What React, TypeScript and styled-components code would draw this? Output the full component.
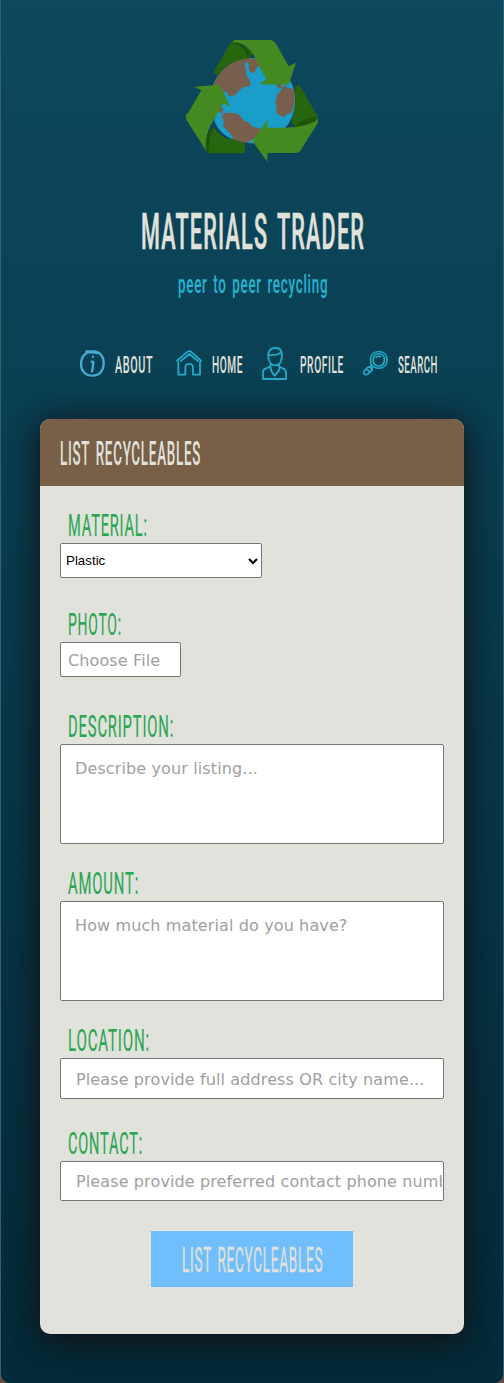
import React, { useLayoutEffect, useRef, useState } from "react";
import styled, { createGlobalStyle } from "styled-components";

const GlobalStyle = createGlobalStyle`
  *, *::before, *::after { box-sizing: border-box; }
  body { margin: 0; background: #6e4a3b; }
`;

const Page = styled.div`
  height: 1383px;
  padding: 40px 39px 0;
  border: solid #34606f;
  border-width: 0 1px;
  border-radius: 0 0 9px 9px;
  background: linear-gradient(#0d485e 0%, #0a4054 28%, #042b3a 100%);
  overflow: hidden;
  font-family: Roboto, "Liberation Sans", sans-serif;
`;

const Header = styled.header`
  display: flex;
  flex-direction: column;
  align-items: center;
`;

const Logo = styled.svg`
  display: block;
  width: 132px;
  height: 122px;
`;

const Title = styled.h1`
  margin: 40px 0 0;
  color: #e1e2dc;
  font-size: 50px;
  font-weight: 500;
  line-height: 60px;
  -webkit-text-stroke: 0.6px #e1e2dc;
`;

const Tagline = styled.p`
  margin: 8px 0 0;
  color: #25b4d2;
  font-size: 25px;
  font-weight: 500;
  line-height: 30px;
`;

const Nav = styled.nav`
  display: flex;
  height: 36px;
  margin: 45px 0 0 40px;
`;

const NavItem = styled.a<{ $gap: number; $after: number }>`
  display: flex;
  align-items: center;
  gap: ${(p) => p.$gap}px;
  margin-right: ${(p) => p.$after}px;
  color: #e1e2dc;
  font-size: 24.5px;
  font-weight: 500;
  line-height: 33px;

  & > span { padding-top: 3px; }
`;

const NavIcon = styled.svg`
  display: block;
  flex: none;
  fill: none;
  stroke: #24a9c6;
  stroke-width: 7;
  stroke-linecap: round;
  stroke-linejoin: round;
`;

const Card = styled.main`
  height: 915px;
  margin-top: 38px;
  border-radius: 10px;
  background: #e1e2dc;
  box-shadow: 0 5px 40px rgba(20, 16, 16, 0.7), 0 6px 24px rgba(20, 16, 16, 0.5);
`;

const CardHead = styled.h2`
  height: 67px;
  margin: 0;
  padding: 1px 20px 0;
  border-radius: 10px 10px 0 0;
  background: #775f48;
  color: #e1e2dc;
  font-size: 33px;
  font-weight: 500;
  line-height: 67px;
`;

const Form = styled.form`
  display: flex;
  flex-direction: column;
  align-items: flex-start;
  padding: 21px 20px 0;
`;

const Field = styled.div<{ $after: number }>`
  width: 100%;
  margin-bottom: ${(p) => p.$after}px;
`;

const Label = styled.label`
  display: block;
  height: 36px;
  padding: 0 0 0 8px;
  color: #2ba652;
  font-size: 32px;
  font-weight: 400;
  line-height: 36px;
  -webkit-text-stroke: 0.2px #2ba652;
`;

const control = `
  display: block;
  margin: 0;
  border: 1px solid #767676;
  border-radius: 2px;
  background: #fff;
  outline: none;
  font-family: "DejaVu Sans", sans-serif;
  font-size: 16px;
  letter-spacing: 0.12px;
  &::placeholder { color: #a0a0a0; opacity: 1; }
`;

const SelectBox = styled.div`
  ${control}
  display: flex;
  align-items: center;
  justify-content: space-between;
  width: 202px;
  height: 35px;
  padding: 0 3px 0 5px;
  color: #000;
  font-family: "Liberation Sans", sans-serif;
  font-size: 13.33px;
  letter-spacing: 0;
`;

const FileButton = styled.div`
  ${control}
  width: 121px;
  height: 35px;
  padding-left: 7px;
  color: #a0a0a0;
  line-height: 35px;
`;

const Area = styled.textarea`
  ${control}
  width: 100%;
  height: 100px;
  padding: 14px 14px;
  resize: none;
`;

const Input = styled.input<{ $height: number }>`
  ${control}
  width: 100%;
  height: ${(p) => p.$height}px;
  padding: 1px 1px 0 15px;
`;

const Submit = styled.button`
  display: flex;
  justify-content: center;
  align-items: center;
  align-self: center;
  width: 202px;
  height: 56px;
  padding: 2px 0 0;
  border: 0;
  background: #71befc;
  color: #e1e2dc;
  font-family: inherit;
  font-size: 35px;
  font-weight: 400;
  -webkit-text-stroke: 0.3px #e1e2dc;
`;

const FitBox = styled.span`
  display: block;
  white-space: nowrap;
  letter-spacing: 0.055em;
  word-spacing: 0.12em;
`;

const FitInner = styled.span`
  display: inline-block;
  transform-origin: 0 50%;
`;

/* Squeezes a line of text horizontally into the given width. */
function Fit({ width, children }: { width: number; children: string }) {
  const ref = useRef<HTMLSpanElement>(null);
  const [scale, setScale] = useState(0.5);
  useLayoutEffect(() => {
    if (ref.current) setScale((width + 1) / ref.current.offsetWidth);
  }, [width, children]);
  return (
    <FitBox style={{ width }}>
      <FitInner ref={ref} style={{ transform: `scaleX(${scale})` }}>
        {children}
      </FitInner>
    </FitBox>
  );
}

function RecycleGlobe() {
  return (
    <Logo viewBox="48 45 396 366" aria-hidden="true">
      <circle cx="248" cy="227" r="128" fill="#1b9dca" />
      <g fill="#785e4c">
        <path d="M128 185C143 141 184 101 238 99L266 103L279 117L262 125C256 131 259 143 246 144C231 140 240 120 233 112L225 113V124C232 139 224 148 232 154C238 162 243 172 240 183L223 186L211 193L196 210L181 214L173 210L172 200L162 201L157 210L125 208Z" />
        <path d="M149 240L160 252L157 266L145 260ZM158 266L173 263L197 265L211 272L219 285L237 293L248 305L273 312L261 335L245 346L233 351C217 355 202 350 190 342C185 327 166 315 158 301L162 292L156 280Z" />
        <path d="M318 178L336 176L333 190L323 189ZM347 181L363 189L371 194C377 218 374 243 365 264L351 267L341 277L327 270L319 263L320 246L316 234L320 218L320 209L332 198L337 187Z" />
      </g>
      <path d="M350 177L357 181L362 174L366 181L360 190L349 187Z" fill="#1b9dca" />
      <g fill="#27650f">
        <path d="M130 143L181 54L192 46L250 80L239 100C196 105 164 120 144 151Z" />
        <path d="M374 187L388 179L443 274L435 295L376 306L364 291C376 260 378 221 374 187Z" />
        <path d="M124 310H134C146 328 160 340 186 343L225 354V385H116L108 369Z" />
      </g>
      <path d="M133 288C146 318 167 337 192 343C184 327 166 313 157 299L160 290L156 275L150 262Z" fill="#1b9dca" />
      <g fill="#20540a">
        <path d="M184 53C207 56 226 69 232 97L245 93L238 78L207 54Z" />
        <path d="M373 306C385 292 409 277 439 276L440 286L404 307Z" />
        <path d="M111 380C103 352 110 328 124 312L132 311C119 334 115 355 117 384Z" />
      </g>
      <g fill="#458a21">
        <path d="M186 51L195 45H301Q311 46 317 55L356 124L378 113L356 179L268 178L289 163L263 115C250 79 226 51 186 51Z" />
        <path d="M73 185L150 179L181 247L160 235L128 291C112 315 104 347 109 378L49 284L48 268L55 263L94 196Z" />
        <path d="M292 284V308C347 309 400 309 437 288L443 276V295L391 377Q386 384 375 384H292V410L248 349Z" />
      </g>
    </Logo>
  );
}

function InfoIcon() {
  return (
    <NavIcon width="25" height="27" viewBox="30 42 75 81" style={{ stroke: "#48abcf" }}>
      <path d="M49 46H70C87 45 102 61 101 82C101 104 88 119 68 119C46 119 33 105 33 84C33 67 42 54 56 48L87 51M65 77L70 78L68 97L66 106M69 62V62" />
    </NavIcon>
  );
}

function HomeIcon() {
  return (
    <NavIcon width="26" height="26" viewBox="318 43 78 78">
      <path strokeWidth="5.5" d="M321 75L353 48Q358 45 363 48L393 75M325 79V117H346V96C346 81 369 81 369 96V117H390V79M332 76L358 55L384 76" />
    </NavIcon>
  );
}

function ProfileIcon() {
  return (
    <NavIcon width="25" height="33" viewBox="36 33 75 99">
      <path strokeWidth="5.5" d="M55 65C53 48 59 36 75 36C91 35 98 45 95 66C93 82 88 88 75 88C63 88 58 82 55 65ZM57 57C68 58 81 57 91 51M62 86V92L48 97Q39 99 39 110V129H108V110Q108 100 99 97L87 92V86M61 94L65 107L74 119L86 105L89 94" />
    </NavIcon>
  );
}

function SearchIcon() {
  return (
    <NavIcon width="25" height="26" viewBox="338 43 76 78">
      <path strokeWidth="5" d="M386 47C402 47 411 57 411 72C411 88 401 98 386 98C370 98 361 88 361 73C361 57 371 47 386 47ZM386 54C398 54 403 61 403 72C403 85 397 91 386 91C374 91 369 84 369 73C369 61 375 54 386 54ZM378 65L382 62H391M364 87L357 96M369 93L362 99M352 95L341 107Q338 115 346 118Q352 118 366 103Q367 95 357 94ZM349 101L359 108" />
    </NavIcon>
  );
}

export default function App() {
  return (
    <>
      <GlobalStyle />
      <Page>
        <Header>
          <RecycleGlobe />
          <Title><Fit width={223}>MATERIALS TRADER</Fit></Title>
          <Tagline><Fit width={149}>peer to peer recycling</Fit></Tagline>
        </Header>
        <Nav>
          <NavItem $gap={10} $after={24}><InfoIcon /><Fit width={37}>ABOUT</Fit></NavItem>
          <NavItem $gap={10} $after={20}><HomeIcon /><Fit width={30}>HOME</Fit></NavItem>
          <NavItem $gap={13} $after={20}><ProfileIcon /><Fit width={43}>PROFILE</Fit></NavItem>
          <NavItem $gap={10} $after={0}><SearchIcon /><Fit width={39}>SEARCH</Fit></NavItem>
        </Nav>
        <Card>
          <CardHead><Fit width={140}>LIST RECYCLEABLES</Fit></CardHead>
          <Form>
            <Field $after={28}>
              <Label><Fit width={79}>MATERIAL:</Fit></Label>
              <SelectBox>
                Plastic
                <svg width="10" height="8" viewBox="0 0 10 8" fill="none" stroke="#000" strokeWidth="2">
                  <path d="M1 2L5 6L9 2" />
                </svg>
              </SelectBox>
            </Field>
            <Field $after={31}>
              <Label><Fit width={53}>PHOTO:</Fit></Label>
              <FileButton>Choose File</FileButton>
            </Field>
            <Field $after={21}>
              <Label><Fit width={105}>DESCRIPTION:</Fit></Label>
              <Area placeholder="Describe your listing..." />
            </Field>
            <Field $after={21}>
              <Label><Fit width={70}>AMOUNT:</Fit></Label>
              <Area placeholder="How much material do you have?" />
            </Field>
            <Field $after={26}>
              <Label><Fit width={81}>LOCATION:</Fit></Label>
              <Input $height={41} placeholder="Please provide full address OR city name..." />
            </Field>
            <Field $after={30}>
              <Label><Fit width={74}>CONTACT:</Fit></Label>
              <Input $height={40} placeholder="Please provide preferred contact phone number" />
            </Field>
            <Submit type="button"><Fit width={140}>LIST RECYCLEABLES</Fit></Submit>
          </Form>
        </Card>
      </Page>
    </>
  );
}
